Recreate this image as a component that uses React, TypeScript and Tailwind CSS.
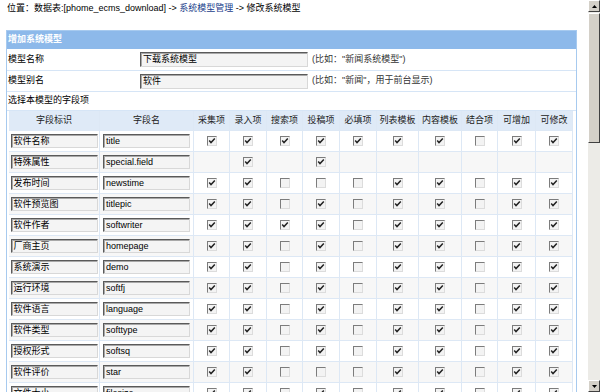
const font = "font-['Liberation_Sans','Noto_Sans_CJK_SC',sans-serif]";

const columns = ["采集项", "录入项", "搜索项", "投稿项", "必填项", "列表模板", "内容模板", "结合项", "可增加", "可修改"];

// 1 = checked, 0 = unchecked, - = no box
const fields: [string, string, string][] = [
  ["软件名称", "title", "1111111011"],
  ["特殊属性", "special.field", "-1-1------"],
  ["发布时间", "newstime", "1100011011"],
  ["软件预览图", "titlepic", "1101011011"],
  ["软件作者", "softwriter", "1111011011"],
  ["厂商主页", "homepage", "1101011011"],
  ["系统演示", "demo", "1101011011"],
  ["运行环境", "softfj", "1101011011"],
  ["软件语言", "language", "1101011011"],
  ["软件类型", "softtype", "1101011011"],
  ["授权形式", "softsq", "1101011011"],
  ["软件评价", "star", "1100011011"],
  ["文件大小", "filesize", "1101011011"],
];

function Box({ checked }: { checked: boolean }) {
  return (
    <span className="flex size-[10px] items-center justify-center border border-t-[#7c7c7c] border-l-[#7c7c7c] border-r-[#dcdcdc] border-b-[#dcdcdc] bg-[#f3f3f3]">
      {checked && (
        <svg width="8" height="8" viewBox="0 0 8 8">
          <path d="M1.2 3.6 L3 5.6 L6.8 1.6" fill="none" stroke="#222" strokeWidth="1.5" />
        </svg>
      )}
    </span>
  );
}

function Field({ value, className }: { value: string; className: string }) {
  return (
    <div
      className={`flex items-center border border-t-[#5a5a5a] border-l-[#5a5a5a] border-r-[#d8d8d8] border-b-[#d8d8d8] bg-[#f4f4f4] pl-[2px] text-[9px] leading-none text-black shadow-[inset_1px_1px_0_#a8a8a8] ${className}`}
    >
      {value}
    </div>
  );
}

function Scrollbar() {
  const btn =
    "flex h-[12px] w-[12px] items-center justify-center border border-t-white border-l-white border-r-[#404040] border-b-[#404040] bg-[#d4d0c8]";
  return (
    <div className="flex h-[392px] w-[12px] shrink-0 flex-col bg-[#ecebe7]">
      <div className={btn}>
        <svg width="5" height="3" viewBox="0 0 5 3">
          <path d="M0 3 L2.5 0 L5 3 Z" fill="#000" />
        </svg>
      </div>
      <div className="mt-px h-[130px] w-[12px] border border-t-white border-l-white border-r-[#404040] border-b-[#404040] bg-[#d4d0c8]" />
      <div className="flex-1" />
      <div className={btn}>
        <svg width="5" height="3" viewBox="0 0 5 3">
          <path d="M0 0 L2.5 3 L5 0 Z" fill="#000" />
        </svg>
      </div>
    </div>
  );
}

export default function App() {
  const grid =
    "grid grid-cols-[91px_94px_36px_37px_36px_37px_37px_42px_43px_36px_38px_37px]";
  const cell = "flex h-[21px] items-center justify-center border-r border-b border-[#dde8f5]";

  return (
    <div className={`flex h-[392px] w-[600px] overflow-hidden bg-white ${font} text-[9px] text-black`}>
      <div className="flex-1">
        <div className="flex h-[30px] items-start pl-[7px] pt-[3px] leading-[10px]">
          位置：数据表:[phome_ecms_download] -&gt;&nbsp;
          <span className="text-[#1a3d8a]">系统模型管理</span>
          &nbsp;-&gt; 修改系统模型
        </div>

        <div className="ml-[6px] w-[571px] border border-[#a7caef]">
          <div className="flex h-[18px] items-center bg-[#8db9ea] pl-[1px] font-bold text-white">
            增加系统模型
          </div>
          <div className="flex h-[22px] items-center border-b border-[#d6e5f6] pl-[1px]">
            <span className="w-[132px]">模型名称</span>
            <Field value="下载系统模型" className="h-[15px] w-[168px]" />
            <span className="ml-[4px] text-[#333]">(比如："新闻系统模型")</span>
          </div>
          <div className="flex h-[21px] items-center border-b border-[#d6e5f6] pl-[1px]">
            <span className="w-[132px]">模型别名</span>
            <Field value="软件" className="h-[15px] w-[168px]" />
            <span className="ml-[4px] text-[#333]">(比如："新闻"，用于前台显示)</span>
          </div>
          <div className="flex h-[19px] items-center border-b border-[#d6e5f6] pl-[1px]">
            选择本模型的字段项
          </div>

          <div className="px-[2px]">
            <div className={grid}>
              {["字段标识", "字段名", ...columns].map((h) => (
                <div
                  key={h}
                  className="flex h-[20px] items-center justify-center border-r border-b border-[#dde8f5] bg-[#dfeaf7] text-[#222]"
                >
                  {h}
                </div>
              ))}
              {fields.map(([label, name, marks], r) => {
                const bg = r % 2 === 1 ? "bg-[#f7f7f7]" : "bg-white";
                return [
                  <div key={`${name}-l`} className={`${cell} ${bg}`}>
                    <Field value={label} className="h-[14px] w-[87px]" />
                  </div>,
                  <div key={`${name}-n`} className={`${cell} ${bg}`}>
                    <Field value={name} className="h-[14px] w-[87px]" />
                  </div>,
                  ...marks.split("").map((m, i) => (
                    <div key={`${name}-${i}`} className={`${cell} ${bg}`}>
                      {m !== "-" && <Box checked={m === "1"} />}
                    </div>
                  )),
                ];
              })}
            </div>
          </div>
        </div>
      </div>
      <Scrollbar />
    </div>
  );
}
